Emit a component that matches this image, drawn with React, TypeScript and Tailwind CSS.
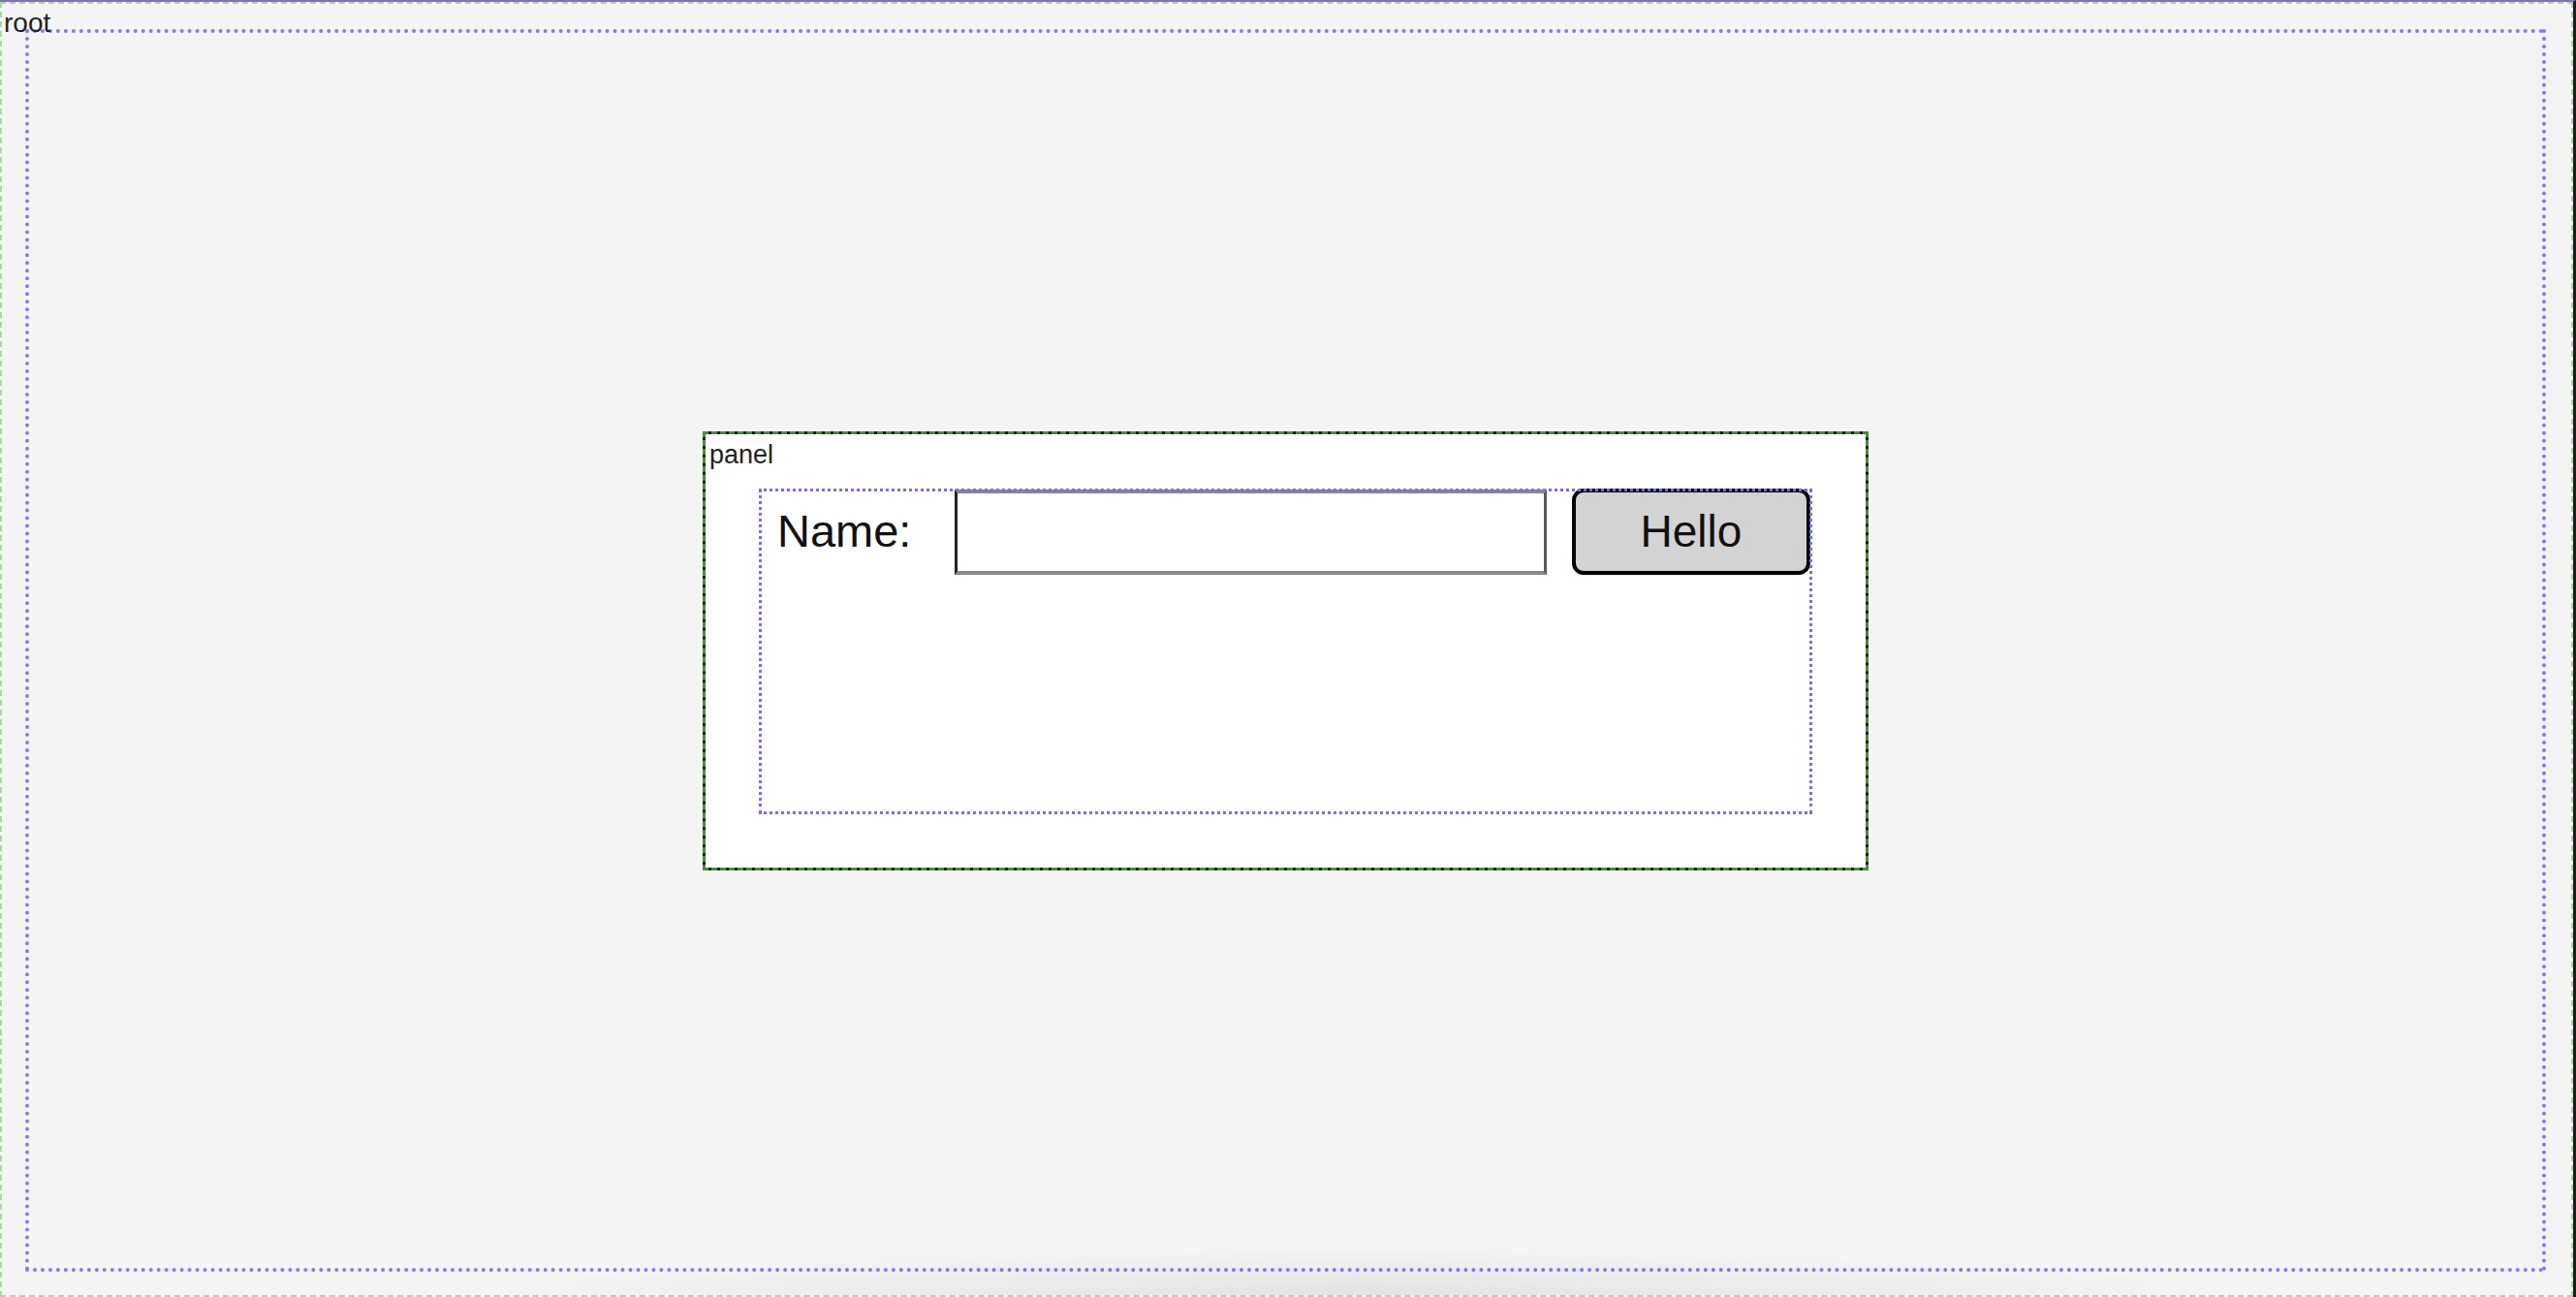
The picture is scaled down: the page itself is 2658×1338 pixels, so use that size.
import React from "react";

export default function App() {
  return (
    <div className="h-[1338px] w-[2658px] overflow-hidden border-t-2 border-r-[3px] border-t-[#8a6cb8] border-r-[#1c1c1c] bg-[#f4f4f4] font-['Liberation_Sans',Arial,sans-serif] text-[#1a1a1a]">
      {/* fenêtre racine */}
      <div className="relative h-[1336px] w-[2655px] border-2 border-dashed border-[#acd6a6]">
        <span className="absolute left-[2px] top-[4px] text-[28px] leading-[32px] text-[#222]">root</span>

        <div className="ml-[24px] mt-[26px] flex h-[1282px] w-[2601px] items-center justify-center border-4 border-dotted border-[#7c7cf4]">
          {/* panneau */}
          <div className="relative h-[453px] w-[1203px] bg-[#1e1e1e]">
            <div className="h-full w-full border-[3px] border-dashed border-[#4c8a3e] bg-white bg-clip-padding p-[57px] pt-[58px]">
              <div className="h-[332px] w-[1083px] outline-[3px] outline-offset-[-1px] outline-dotted outline-[#6e6ef6]">
                <div className="flex items-start">
                  <label className="ml-[17px] mt-[15px] text-[47px] leading-[54px] text-[#111]">Name:</label>
                  <input
                    type="text"
                    className="ml-[45px] mt-[-1px] h-[88px] w-[612px] border-t-[4px] border-r-[3px] border-b-[4px] border-l-[3px] border-t-[#878787] border-r-[#575757] border-b-[#8a8a8a] border-l-[#222] bg-white outline-none"
                  />
                  <button className="ml-[26px] mt-[-2px] h-[89px] w-[247px] rounded-[12px] border-4 border-black bg-[#d3d3d3] text-[46px] text-[#111]">
                    Hello
                  </button>
                </div>
              </div>
            </div>
            <span className="absolute left-[7px] top-[8px] text-[27px] leading-[32px] text-[#222]">panel</span>
          </div>
        </div>

        <div className="pointer-events-none absolute bottom-0 left-[460px] h-[60px] w-[1880px] bg-[radial-gradient(ellipse_60%_100%_at_bottom,rgba(0,0,0,0.07),transparent_80%)]" />
      </div>
    </div>
  );
}
